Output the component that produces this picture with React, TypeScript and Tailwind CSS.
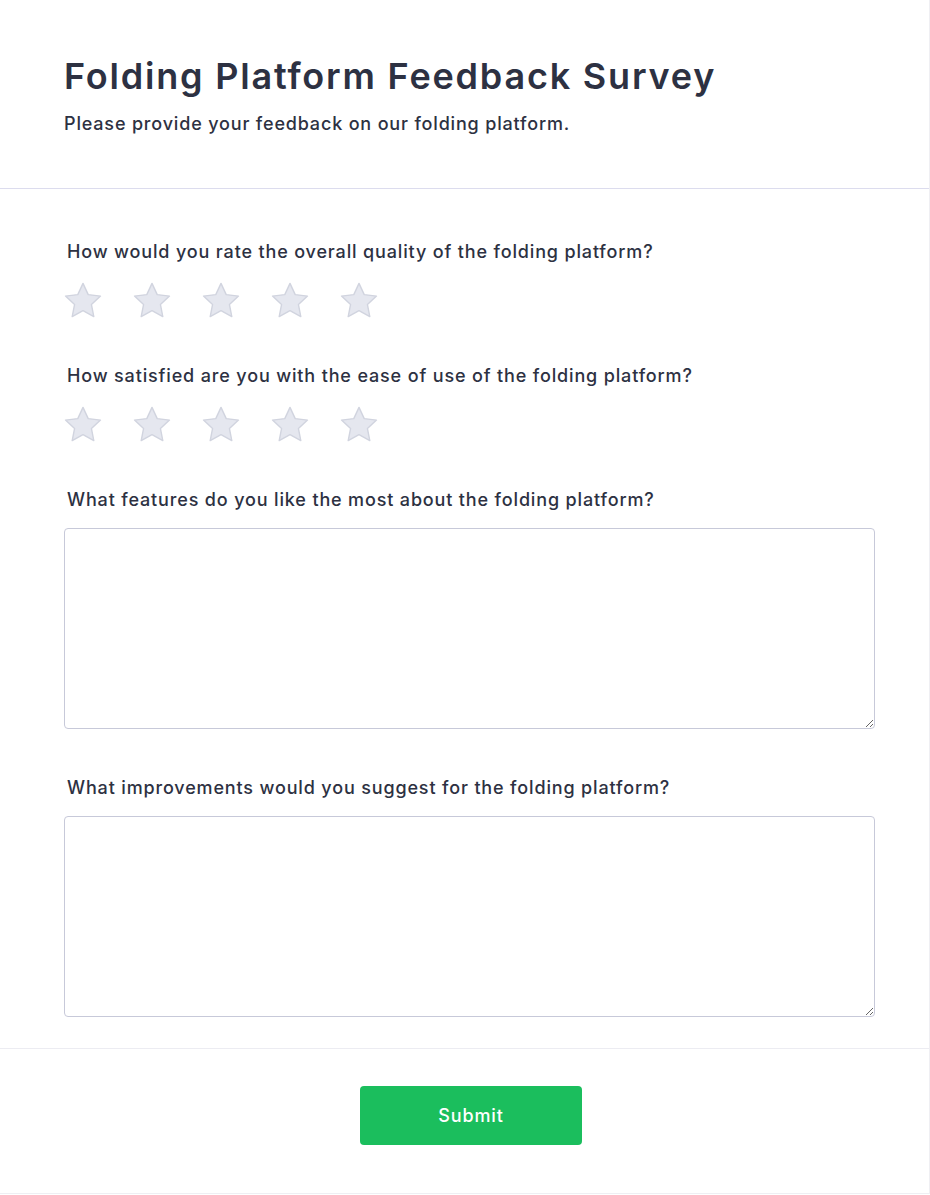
function Star() {
  return (
    <svg
      viewBox="0 0 38 38"
      className="h-[38px] w-[38px]"
      xmlns="http://www.w3.org/2000/svg"
      aria-hidden="true"
    >
      <polygon
        points="19,2.4 24.22,13.59 36.5,15.1 27.45,23.51 29.8,35.6 19,29.65 8.2,35.6 10.55,23.51 1.5,15.1 13.78,13.59"
        fill="#e5e7ef"
        stroke="#d1d4df"
        strokeWidth="1.4"
        strokeLinejoin="round"
      />
    </svg>
  );
}

function RatingQuestion({ label }: { label: string }) {
  return (
    <div className="mb-[41px]">
      <p className="pl-[3px] text-lg font-medium leading-7 tracking-[0.047em] text-[#2d3142]">
        {label}
      </p>
      <div className="mt-[15px] flex h-10 gap-[31px]">
        {[1, 2, 3, 4, 5].map((n) => (
          <button key={n} type="button" className="block h-[38px]">
            <Star />
          </button>
        ))}
      </div>
    </div>
  );
}

function TextQuestion({ label, last }: { label: string; last?: boolean }) {
  return (
    <div className={last ? "" : "mb-[45px]"}>
      <p className="pl-[3px] text-lg font-medium leading-7 tracking-[0.047em] text-[#2d3142]">
        {label}
      </p>
      <textarea
        rows={8}
        className="mt-[14px] block h-[201px] w-full resize-y rounded border border-[#c7c9d9] p-3 outline-none"
      />
    </div>
  );
}

export default function App() {
  return (
    <div
      className="min-h-[1194px] w-[930px] border-r border-b border-[#efeff3] bg-white"
      style={{ fontFamily: "Inter, 'Noto Sans', sans-serif" }}
    >
      {/* Header */}
      <div className="border-b border-[#dcdcee] pt-14 pb-[50px] pr-[54px] pl-16">
        <h1 className="text-4xl leading-10 font-semibold tracking-[0.05em] text-[#2d3142]">
          Folding Platform Feedback Survey
        </h1>
        <p className="mt-[14px] text-lg font-medium leading-7 tracking-[0.046em] text-[#2d3142]">
          Please provide your feedback on our folding platform.
        </p>
      </div>

      {/* Questions */}
      <div className="pt-[49px] pr-[54px] pb-[31px] pl-16">
        <RatingQuestion label="How would you rate the overall quality of the folding platform?" />
        <RatingQuestion label="How satisfied are you with the ease of use of the folding platform?" />
        <TextQuestion label="What features do you like the most about the folding platform?" />
        <TextQuestion
          label="What improvements would you suggest for the folding platform?"
          last
        />
      </div>

      {/* Footer */}
      <div className="flex justify-center border-t border-[#ececf2] pt-[37px] pr-[53px] pb-12 pl-[66px]">
        <button
          type="button"
          className="h-[59px] w-[222px] rounded bg-[#1bbe5d] text-lg font-medium tracking-[0.05em] text-white"
        >
          Submit
        </button>
      </div>
    </div>
  );
}
